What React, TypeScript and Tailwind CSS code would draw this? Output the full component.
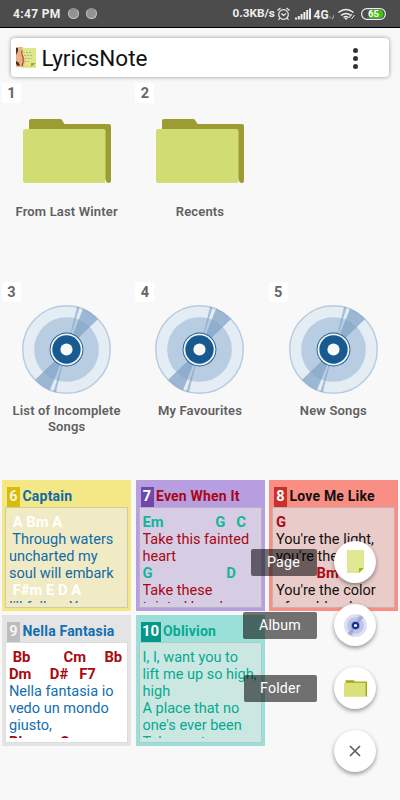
import React from "react";

function Folder({ className, back = "#9d9c33", front = "#d1dd73" }: { className: string; back?: string; front?: string }) {
  return (
    <svg className={className} viewBox="0 0 88 64">
      <path d="M6 2q0-2 2-2h29q1.500 0 2 1l2.500 4H86q2 0 2 2v54.500q0 2.500-2.500 2.500T83 61L6 20z" fill={back} />
      <rect x="0" y="10" width="82.500" height="54" rx="2" fill={front} />
    </svg>
  );
}

function Disc({ className, ring, light, mid, wedge, core }: { className: string; ring: string; light: string; mid: string; wedge: string; core: string }) {
  return (
    <svg className={className} viewBox="0 0 88 88">
      <circle cx="44" cy="44" r="43.300" fill={light} stroke={ring} strokeWidth="1.400" />
      <circle cx="44" cy="44" r="32" fill={mid} />
      <g fill={wedge} fillOpacity="0.7">
        <path d="M44 44L60.500 3.500A43.700 43.700 0 0 1 75 14zM44 44L27.500 84.500A43.700 43.700 0 0 1 13 74z" />
        <path d="M44 44L54.500 1.500L57 2.200zM44 44L33.500 86.500L31 85.800z" fillOpacity="0.6" />
      </g>
      <circle cx="44" cy="44" r="16.700" fill={core} />
      <circle cx="44" cy="44" r="15.800" fill="#eff4f8" />
      <circle cx="44" cy="44" r="14" fill={core} />
      <circle cx="44" cy="44" r="6" fill="#f8f8f8" />
    </svg>
  );
}

function Tile({ n, label, kind }: { n: number; label: string; kind: "folder" | "disc" }) {
  return (
    <div className="h-[199px] pl-0.5 pt-px">
      <div className="flex h-5 w-[19px] items-center justify-center rounded-[2px] bg-white pt-0.5 text-[14.500px] font-bold text-[#666]">{n}</div>
      <div className="-ml-0.5 flex flex-col items-center">
        {kind === "folder" ? (
          <Folder className="mt-4 mb-[21px] h-16 w-[88px]" />
        ) : (
          <Disc className="mt-[3px] mb-[9px] h-[89px] w-[89px]" ring="#b4cbe1" light="#e4edf3" mid="#b8cde1" wedge="#7e9fc5" core="#185990" />
        )}
        <div className="w-[120px] text-center text-[13px] font-semibold leading-4 tracking-[0.150px] text-[#606060]">{label}</div>
      </div>
    </div>
  );
}

type Line = { t: string; c?: string };
type Note = { n: number; title: string; frame: string; paper: string; border: string; badge: string; num: string; color: string; chord: string; lines: Line[] };

const notes: Note[] = [
  {
    n: 6, title: "Captain", frame: "bg-[#f3e786]", paper: "bg-[#f0ebc4]", border: "border-[#d0cba3]", badge: "bg-[#d6bd0c]", num: "text-[#f5f1dd]", color: "text-[#106aa8]", chord: "text-white",
    lines: [{ t: " A Bm A", c: "b" }, { t: " Through waters" }, { t: "uncharted my" }, { t: "soul will embark" }, { t: " F#m E D A", c: "b" }, { t: "I'll follow You" }],
  },
  {
    n: 7, title: "Even When It", frame: "bg-[#b79ee0]", paper: "bg-[#d6cde4]", border: "border-[#b9b0c7]", badge: "bg-[#7049a8]", num: "text-white", color: "text-[#aa0713]", chord: "text-[#12b69a]",
    lines: [{ t: "Em              G   C", c: "b" }, { t: "Take this fainted" }, { t: "heart" }, { t: "G                    D", c: "b" }, { t: "Take these" }, { t: "tainted hands" }],
  },
  {
    n: 8, title: "Love Me Like", frame: "bg-[#f98e85]", paper: "bg-[#e9cbc9]", border: "border-[#c9b0ad]", badge: "bg-[#ca3029]", num: "text-white", color: "text-[#111]", chord: "text-[#ae0812]",
    lines: [{ t: "G", c: "b" }, { t: "You're the light," }, { t: "you're the night" }, { t: "           Bm", c: "b" }, { t: "You're the color" }, { t: "of my blood" }],
  },
  {
    n: 9, title: "Nella Fantasia", frame: "bg-[#e4e4e4]", paper: "bg-white", border: "border-[#dcdcdc]", badge: "bg-[#bdbdbd]", num: "text-[#f4f4f4]", color: "text-[#126eb0]", chord: "text-[#a90a10]",
    lines: [{ t: " Bb         Cm     Bb", c: "b" }, { t: "Dm     D#   F7", c: "b" }, { t: "Nella fantasia io" }, { t: "vedo un mondo" }, { t: "giusto," }, { t: "Bb         C", c: "b" }],
  },
  {
    n: 10, title: "Oblivion", frame: "bg-[#9be0d8]", paper: "bg-[#cae7e2]", border: "border-[#b0cbc6]", badge: "bg-[#04988a]", num: "text-white", color: "text-[#08a991]", chord: "text-[#08a991]",
    lines: [{ t: "I, I, want you to" }, { t: "lift me up so high," }, { t: "high" }, { t: "A place that no" }, { t: "one's ever been" }, { t: "Take me to" }],
  },
];

function NoteCard({ note }: { note: Note }) {
  return (
    <div className={`h-[131px] px-[3px] pt-1.5 ${note.frame}`}>
      <div className={`flex h-[21px] items-center gap-[2.500px] pl-0.5 ${note.color}`}>
        <span className={`flex h-5 items-center justify-center font-bold ${note.n > 9 ? "w-5 text-[15px]" : "w-[13px] text-[14.500px]"} ${note.badge} ${note.num}`}>{note.n}</span>
        <span className="whitespace-nowrap text-[14px] font-bold tracking-[0.200px]">{note.title}</span>
      </div>
      <div className={`h-[101px] border pt-1 pl-[3px] ${note.border} ${note.paper}`}>
        <div className="h-[91px] overflow-hidden pt-0.5 text-[14.500px] leading-[17px]">
          {note.lines.map((line, i) => (
            <div key={i} className={`h-[17px] whitespace-pre ${line.c ? `text-[14.800px] font-bold ${note.chord}` : note.color}`}>{line.t}</div>
          ))}
        </div>
      </div>
    </div>
  );
}

function Fab({ label, width, children }: { label?: string; width?: string; children: React.ReactNode }) {
  return (
    <div className="flex h-[42px] items-center justify-end gap-[17px]">
      {label && <span className={`flex h-[27px] items-center rounded-[2px] bg-black/55 pt-px text-[14.200px] tracking-[0.200px] text-white ${width}`}>{label}</span>}
      <span className="flex h-[42px] w-[42px] items-center justify-center rounded-full bg-white shadow-[0_2px_4px_rgba(0,0,0,0.4)]">{children}</span>
    </div>
  );
}

function StatusBar() {
  return (
    <header className="flex h-7 items-center border-b border-black bg-[#4c4c4c] pl-[13px] text-[12px] font-bold text-[#eee]">
      <span className="w-[55px] whitespace-nowrap pt-px tracking-[0.350px]">4:47 PM</span>
      <span className="h-[11px] w-[11px] rounded-full border border-[#c4c4c4] border-t-[#929292] bg-[#929292]" />
      <span className="ml-[7px] h-[11px] w-[11px] rounded-full border border-[#c4c4c4] border-t-[#929292] bg-[#929292]" />
      <span className="ml-[135.500px] w-[43.500px] whitespace-nowrap pt-px text-[11.800px]">0.3KB/s</span>
      <svg className="h-[14px] w-[123px]" viewBox="0 0 123 14" fill="none" stroke="#eee">
        <circle cx="7.500" cy="7.500" r="4.800" strokeWidth="1.200" />
        <path d="M5.300 6.500L7.500 8.500L10 6.500M1.500 3.500L4.500 1M10.500 1L13.500 3.500M4 11L2.500 13M11 11L12.500 13" strokeWidth="1.200" />
        <path d="M20 12.500v-2M22.800 12.500V9M25.600 12.500V7M28.400 12.500V5M31.200 12.500V3M34 12.500V1.500" strokeWidth="2" />
        <text x="37.500" y="11.500" fill="#eee" stroke="none" fontSize="12" fontWeight="700">4G</text>
        <path d="M54 9v3M56.500 10v2.500M57.500 8v3" strokeWidth="0.700" opacity="0.7" />
        <path d="M62.500 5.500Q70 -0.500 77.500 5.500M65 8.500Q70 4.500 75 8.500M67.500 10.500Q70 8.500 72.500 10.500" strokeWidth="1.600" />
        <path d="M68.300 11h3.400L70 13z" fill="#eee" stroke="none" />
        <path d="M76 7l-3 4M78.500 8l-3 4" strokeWidth="1" />
        <rect x="85.600" y="1.600" width="23.800" height="10.800" rx="5.400" strokeWidth="1.200" />
        <path d="M93 3h10.500q4 0 4 4t-4 4H93z" fill="#40c414" stroke="none" />
        <text x="92" y="10.400" fill="#fff" stroke="none" fontSize="9.500" fontWeight="700">65</text>
      </svg>
    </header>
  );
}

function AppIcon() {
  return (
    <svg className="h-[21px] w-5" viewBox="0 0 20 21">
      <path d="M5 1h15v19H5z" fill="#dfe78d" />
      <path d="M0 0h7q-4 5 1 10q2 6-1 10H0z" fill="#e9b184" />
      <path d="M0 1h2v3L0 8zM0 14q3 1 4 4l-2 1-2-2z" fill="#4b2d25" />
      <path d="M6 3q-1 4 1 7 1 5-1 9" fill="none" stroke="#b92b1d" />
      <path d="M7 5.500h9M8 8.500h8M9 11.500h7M9 14.500h4" stroke="#b0bd70" strokeDasharray="2 1" />
      <path d="M15 20v-4h5z" fill="#a5ad23" />
      <path d="M5 20h15" stroke="#c7d45d" />
    </svg>
  );
}

export default function App() {
  return (
    <div className="relative h-[800px] w-[400px] overflow-hidden bg-[#f8f8f8] font-[Roboto,sans-serif]">
      <StatusBar />
      <div className="mx-[11px] mt-2.5 flex h-[39px] items-center rounded-[4px] bg-white pl-[5px] shadow-[0_0_4px_rgba(0,0,0,0.4)]">
        <AppIcon />
        <h1 className="ml-[5.500px] pt-px text-[22.500px] leading-none text-[#111]">LyricsNote</h1>
        <div className="mr-[31px] ml-auto flex flex-col gap-[3px] pt-px">
          <i className="h-[5px] w-[5px] rounded-full bg-[#333]" />
          <i className="h-[5px] w-[5px] rounded-full bg-[#333]" />
          <i className="h-[5px] w-[5px] rounded-full bg-[#333]" />
        </div>
      </div>
      <main className="mt-[5px]">
        <div className="grid w-[400px] grid-cols-3">
          <Tile n={1} label="From Last Winter" kind="folder" />
          <Tile n={2} label="Recents" kind="folder" />
        </div>
        <div className="grid w-[400px] grid-cols-3">
          <Tile n={3} label="List of Incomplete Songs" kind="disc" />
          <Tile n={4} label="My Favourites" kind="disc" />
          <Tile n={5} label="New Songs" kind="disc" />
        </div>
        <div className="ml-0.5 grid grid-cols-[129px_129px_129px] gap-x-[4.500px] gap-y-1">
          {notes.map((note) => <NoteCard key={note.n} note={note} />)}
        </div>
      </main>
      <nav className="absolute right-6 bottom-[28px] flex flex-col gap-[21px]">
        <Fab label="Page" width="w-[66px] pl-4">
          <svg className="h-6 w-[17px]" viewBox="0 0 17 24">
            <path d="M0 0h17v18l-5 5H0z" fill="#dfe791" />
            <path d="M12 23v-5h5z" fill="#a8af20" />
          </svg>
        </Fab>
        <Fab label="Album" width="w-[74px] pl-4">
          <Disc className="h-[23px] w-[23px]" ring="#d7dcf0" light="#dce0f1" mid="#bdc4e6" wedge="#8e99d0" core="#172c91" />
        </Fab>
        <Fab label="Folder" width="w-[73px] pl-4">
          <Folder className="h-[17px] w-[23px]" back="#a5a716" front="#d9e27a" />
        </Fab>
        <Fab>
          <svg className="h-3 w-3" viewBox="0 0 12 12" fill="none" stroke="#606060" strokeWidth="1.700"><path d="M1 1l10 10M11 1L1 11" /></svg>
        </Fab>
      </nav>
    </div>
  );
}
